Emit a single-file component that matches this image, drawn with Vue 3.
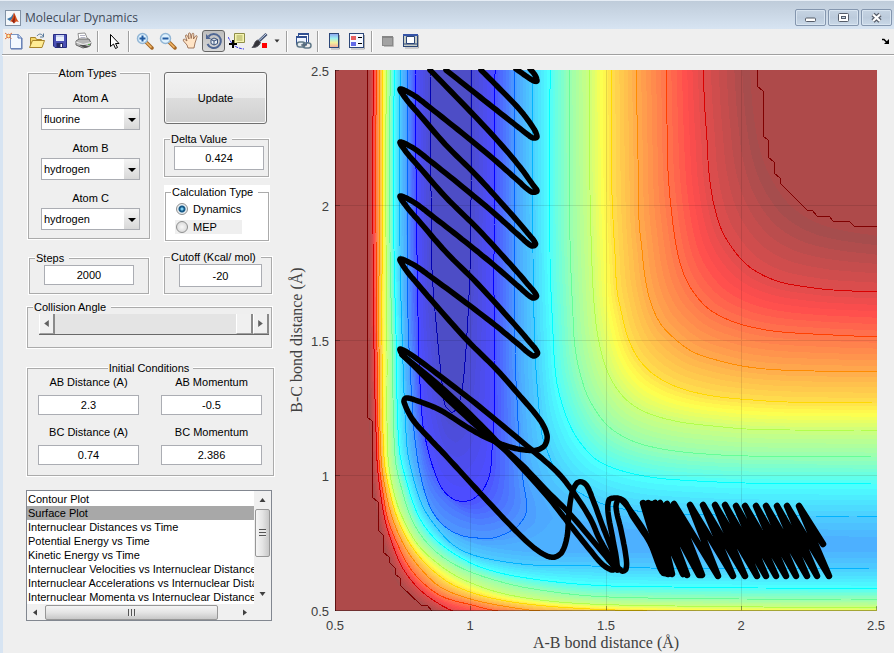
<script setup>
import { ref } from 'vue'

const atoms = ref([
  { id: 'a', label: 'Atom A', value: 'fluorine' },
  { id: 'b', label: 'Atom B', value: 'hydrogen' },
  { id: 'c', label: 'Atom C', value: 'hydrogen' },
])
const delta = ref('0.424')
const mode = ref('dynamics')
const steps = ref('2000')
const cutoff = ref('-20')
const angle = ref(180)
const conditions = ref([
  { id: 'abd', label: 'AB Distance (A)', value: '2.3' },
  { id: 'abm', label: 'AB Momentum', value: '-0.5' },
  { id: 'bcd', label: 'BC Distance (A)', value: '0.74' },
  { id: 'bcm', label: 'BC Momentum', value: '2.386' },
])
const plots = [
  'Contour Plot',
  'Surface Plot',
  'Internuclear Distances vs Time',
  'Potential Energy vs Time',
  'Kinetic Energy vs Time',
  'Internuclear Velocities vs Internuclear Distance',
  'Internuclear Accelerations vs Internuclear Distance',
  'Internuclear Momenta vs Internuclear Distance',
]
const plot = ref('Surface Plot')

/* Smooth curve through the given points */
function spline(pts, n = 8) {
  const out = []
  for (let i = 0; i < pts.length - 1; i++) {
    const a = pts[Math.max(i - 1, 0)]
    const b = pts[i]
    const c = pts[i + 1]
    const d = pts[Math.min(i + 2, pts.length - 1)]
    const len = Math.hypot(c[0] - b[0], c[1] - b[1])
    const l0 = Math.hypot(b[0] - a[0], b[1] - a[1]) || len
    const l2 = Math.hypot(d[0] - c[0], d[1] - c[1]) || len
    const m1 = [0, 1].map((k) => ((c[k] - a[k]) / (l0 + len)) * len)
    const m2 = [0, 1].map((k) => ((d[k] - b[k]) / (len + l2)) * len)
    for (let s = 0; s < n; s++) {
      const t = s / n
      const t2 = t * t
      const t3 = t2 * t
      out.push([0, 1].map((k) =>
        (2 * t3 - 3 * t2 + 1) * b[k] + (t3 - 2 * t2 + t) * m1[k] +
        (3 * t2 - 2 * t3) * c[k] + (t3 - t2) * m2[k]))
    }
  }
  out.push(pts[pts.length - 1])
  return out
}

/* The same curve as a fixed number of points, evenly spaced */
function resample(pts, n = 110) {
  const acc = [0]
  for (let i = 1; i < pts.length; i++) {
    acc.push(acc[i - 1] + Math.hypot(pts[i][0] - pts[i - 1][0], pts[i][1] - pts[i - 1][1]))
  }
  const total = acc[acc.length - 1]
  const out = []
  let j = 1
  for (let i = 0; i < n; i++) {
    const want = (total * i) / (n - 1)
    while (j < pts.length - 1 && acc[j] < want) j++
    const t = (want - acc[j - 1]) / (acc[j] - acc[j - 1] || 1)
    out.push([0, 1].map((k) => pts[j - 1][k] + (pts[j][k] - pts[j - 1][k]) * t))
  }
  return out
}

const toPath = (pts) => 'M' + pts.map((p) => p[0].toFixed(1) + ' ' + p[1].toFixed(1)).join('L')

function jet(v, alpha) {
  const ch = [3, 2, 1].map((c) => Math.max(0, Math.min(1, 1.5 - Math.abs(4 * v - c))))
  const px = ch.map((c) => Math.round(255 * (1 - alpha + alpha * c)))
  return `rgb(${px.join(',')})`
}

/* Edge of the energy cutoff, which follows the steps of the grid */
const plateau = [
  [[757,70],[757,86],[763,91],[763,136],[768,140],[768,157],[774,162],[774,173],[780,178],[780,183],[807,210],[812,210],[817,216],[829,216],[833,221],[849,221],[854,226],[877,226]],
  [[367,70],[367,417],[372,421],[372,497],[378,502],[378,530],[383,535],[383,552],[389,557],[389,562],[395,568],[395,574],[400,578],[400,585],[421,605],[427,605],[432,611]],
]

/* Energy contours: outer branch, inner wall branch, both from the top edge */
const contours = [
  { v: 1, silent: true,
    r: [[750,70],[753,110],[760,150],[772,180],[792,207],[825,226],[877,236]],
    l: [[367,70],[367,300],[369,417],[372,480],[378,525],[388,560],[402,590],[425,608],[455,622],[600,640],[877,646]] },
  { v: 0.9125,
    r: [[703,70],[705,112],[707,140],[709,173],[714,205],[723,233],[741,259],[757,272],[780,282],[807,287],[833,290],[877,292]],
    l: [[373,70],[373,250],[374,350],[377,460],[380,490],[385,520],[392,543],[402,567],[417,587],[433,600],[453,611],[500,622],[600,630],[877,634]] },
  { v: 0.8125,
    r: [[666,70],[667,125],[668,170],[671,207],[677,250],[685,277],[697,297],[713,312],[740,324],[773,331],[813,334],[877,337]],
    l: [[376,70],[376,250],[377,350],[379,460],[383,493],[388,520],[397,543],[408,565],[423,583],[443,597],[472,605],[497,611],[600,620],[877,623]] },
  { v: 0.7375,
    r: [[636,70],[638,160],[639,220],[642,250],[645,277],[650,300],[660,323],[675,339],[693,352],[713,359],[742,366],[780,370],[877,372]],
    l: [[379,70],[379,250],[379,350],[381,457],[386,493],[393,520],[405,547],[420,568],[440,587],[467,598],[497,605],[540,611],[650,616],[877,617]] },
  { v: 0.6625,
    r: [[611,70],[612,193],[615,255],[617,290],[622,315],[628,338],[638,358],[653,374],[677,387],[707,395],[740,399],[787,402],[877,403]],
    l: [[382,70],[382,250],[382,350],[384,457],[390,493],[398,520],[412,547],[430,568],[453,585],[487,597],[527,604],[590,609],[700,612],[877,613]] },
  { v: 0.55,
    r: [[589,70],[590,193],[592,265],[594,303],[598,337],[605,365],[615,386],[630,403],[650,414],[680,422],[713,426],[747,429],[793,430],[877,430]],
    l: [[386,70],[386,250],[387,350],[388,457],[395,497],[405,523],[418,545],[437,563],[460,578],[497,592],[540,600],[590,604],[677,606],[877,608]] },
  { v: 0.475,
    r: [[569,70],[570,240],[573,317],[575,347],[580,373],[589,399],[607,425],[630,440],[657,448],[693,453],[747,456],[877,457]],
    l: [[390,70],[390,250],[392,333],[395,457],[402,490],[412,520],[427,543],[447,560],[473,573],[513,585],[547,591],[590,596],[647,598],[747,599],[877,599]] },
  { v: 0.375,
    r: [[550,70],[550,257],[553,333],[556,377],[563,407],[575,435],[593,457],[608,466],[630,473],[657,478],[697,481],[747,483],[877,484]],
    l: [[394,70],[394,250],[396,333],[399,447],[407,483],[418,515],[433,537],[453,553],[480,567],[520,577],[590,585],[673,587],[877,589]] },
  { v: 0.3,
    r: [[532,70],[533,257],[535,350],[538,397],[542,435],[547,450],[553,465],[565,482],[580,493],[603,504],[637,511],[713,515],[813,516],[877,516]],
    l: [[400,70],[400,250],[402,333],[407,447],[413,477],[423,507],[437,528],[453,545],[473,555],[500,561],[533,565],[590,566],[647,568],[877,569]] },
  { v: 0.265, silent: true,
    r: [[523,70],[524,350],[528,440],[534,472],[547,500],[590,523],[700,533],[877,537]],
    l: [[403,70],[405,333],[411,447],[420,485],[437,515],[460,538],[500,549],[560,553],[700,552],[877,552]] },
  { v: 0.255, silent: true,
    r: [[520,70],[521,350],[524,440],[530,475],[543,498],[553,518]],
    l: [[405,70],[407,333],[413,447],[424,490],[438,516],[460,537],[485,545],[515,543],[540,533],[553,518]] },
  { v: 0.225,
    r: [[514,70],[515,350],[517,400],[519,437],[523,480],[527,507],[524,518],[517,527]],
    l: [[407,70],[408,317],[413,417],[415,440],[420,473],[430,507],[443,525],[460,535],[477,538],[493,538],[507,533],[517,527]] },
  { v: 0.125,
    r: [[495,70],[494,233],[494,350],[494,417],[492,450],[490,473],[483,490],[473,499],[463,502]],
    l: [[415,70],[418,317],[422,417],[428,450],[435,473],[443,490],[453,499],[463,502]] },
  { v: 0.05,
    r: [[471,70],[471,193],[470,270],[467,333],[463,383],[458,407],[452,413]],
    l: [[430,70],[431,193],[432,270],[437,333],[442,383],[445,405],[452,413]] },
].map((c) => ({ ...c, R: resample(spline(c.r)), L: resample(spline(c.l)) }))

const mix = (a, b, t) => a.map((p, i) => [p[0] + (b[i][0] - p[0]) * t, p[1] + (b[i][1] - p[1]) * t])

const bands = []
contours.forEach((c, i) => {
  const next = contours[i + 1]
  const n = !next ? 1 : Math.max(1, Math.round((c.v - next.v) / 0.0135))
  for (let s = 0; s < n; s++) {
    const t = s / n
    const v = next ? c.v + (next.v - c.v) * t : 0.045
    const R = next ? mix(c.R, next.R, t) : c.R
    const L = next ? mix(c.L, next.L, t) : c.L
    bands.push({ d: toPath([...R, ...[...L].reverse()]) + 'Z', fill: jet(v, 0.7) })
  }
})

const lines = [
  ...plateau.map((p) => ({ d: toPath(p), stroke: jet(1, 1) })),
  ...contours.filter((c) => !c.silent).flatMap((c) =>
    [c.R, c.L].map((p) => ({ d: toPath(p), stroke: jet(c.v, 1) }))),
]

/* Reaction trajectory */
const shallow = (x, y, dx, dy) =>
  [[0, 0], [0.1, 0.06], [0.22, 0.18], [0.45, 0.42], [0.68, 0.67], [0.86, 0.88], [0.96, 0.99]].map(([u, w]) => [x + dx * u, y + dy * w])
const steep = (x, y, dx, dy) =>
  [[0.05, 0.07], [0.13, 0.15], [0.33, 0.35], [0.56, 0.55], [0.78, 0.76], [0.93, 0.91], [0.99, 0.98]].map(([u, w]) => [x + dx * u, y + dy * w])

const vibration = [
  [430,70],[467,108],[497,140],[520,167],[533,185],[537,191],
  ...shallow(400, 89, 137, 104).reverse(),
  ...steep(400, 89, 137, 158),
  ...shallow(400, 142, 137, 105).reverse(),
  ...steep(400, 142, 138, 157),
  ...shallow(400, 196, 138, 103).reverse(),
  ...steep(400, 196, 139, 160),
  ...shallow(400, 259, 139, 98).reverse(),
  [406,270],[415,281],[440,310],[467,340],[497,370],[520,396],[540,420],[547,435],[545,445],[537,450],[525,450],[510,447],[487,438],[467,427],[440,410],[415,400],[406,398],[404,402],[413,420],[430,439],[447,457],[480,493],[513,528],[533,547],[547,556],[555,557],[562,552],[567,537],[569,513],[572,493],[577,483],[582,482],[587,486],[593,500],[603,527],[612,550],[618,570],
]
const crossing = [
  [617,570],[598,547],[570,514],[547,491],[520,463],[480,429],[440,392],[415,367],[402,354],[400,349],[410,354],[440,376],[480,407],[527,446],[557,472],[571,489],[590,518],[600,540],[613,561],[622,571],[626,569],[626,557],[621,530],[616,507],[619,499],[625,502],[633,517],[650,543],[662,572],[668,574],
]
const returning = [
  [402,355],[440,386],[480,424],[520,466],[547,496],[570,525],[590,550],[602,564],[612,570],[617,567],[613,540],[608,512],[609,500],[614,498],[620,499],[630,510],[645,532],[655,552],[668,574],
]
const oscillation = [[823,544],[799,506],[829,576],[787,506],[817,576],[777,506],[807,576],[766,506],[796,576],[756,506],[786,576],[745,506],[776,576],[736,506],[766,576],[725,505],[757,576],[715,505],[745,576],[703,505],[733,576],[690,505],[718,576],[674,504],[702,575],[667,504],[699,575],[660,503],[687,575],[655,503],[672,574],[648,503],[668,574],[643,503],[664,573],[651,504],[683,574]]
const trajectory = [
  spline([[516,69],[526,76],[534,81],[537,81],[535,75],[530,69]]),
  spline([[446,70],[480,97],[513,123],[527,134],[533,138],[537,137],[534,129],[520,110],[497,86],[481,70]]),
  spline(vibration),
  spline(crossing),
  spline(returning),
].map(toPath)

const xTicks = [[335, '0.5'], [470, '1'], [606, '1.5'], [741, '2'], [876, '2.5']]
const yTicks = [[70, '2.5'], [205, '2'], [340, '1.5'], [475, '1'], [610, '0.5']]
</script>

<template>
  <div class="window">
    <header class="titlebar">
      <svg class="logo" viewBox="0 0 16 16" aria-hidden="true">
        <rect x=".5" y=".5" width="15" height="15" fill="#f4f7fa" stroke="#8292a5" />
        <path d="M2 9l4-2 2-3 1-1-1 5-3 3z" fill="#3b77a8" />
        <path d="M9 2.500c1.500 2 2.500 7 5 9.500-2-1-3-1-5 1.500-1-1.500-2-2-4-2 2-2 3-5 4-9z" fill="#d7501b" />
        <path d="M9 3c.8 3 0 6-2 8l2 2.500c1-2 1.500-6 0-10.500z" fill="#8c2316" />
      </svg>
      <h1>Molecular Dynamics</h1>
      <div class="winbtns">
        <button type="button" aria-label="Minimize">
          <svg viewBox="0 0 13 11"><rect x="1.500" y="6" width="10" height="3.500" rx="1" fill="#fff" stroke="#555c69" /></svg>
        </button>
        <button type="button" aria-label="Maximize">
          <svg viewBox="0 0 13 11"><rect x="1.500" y="1.500" width="10" height="8" rx="1" fill="#fff" stroke="#555c69" /><rect x="4.500" y="4.500" width="4" height="2" fill="#c7d5e4" stroke="#555c69" /></svg>
        </button>
        <button type="button" aria-label="Close">
          <svg viewBox="0 0 13 11"><path d="M3 2.500l7 6.500M10 2.500L3 9" stroke="#555c69" stroke-width="4.500" /><path d="M3 2.500l7 6.500M10 2.500L3 9" stroke="#fff" stroke-width="2.200" /></svg>
        </button>
      </div>
    </header>

    <div class="client">
      <nav class="toolbar" aria-label="Figure tools">
        <button type="button" aria-label="New figure">
          <svg viewBox="0 0 18 18"><path d="M5.500 2.500h8l3 3v11h-11z" fill="#f4f9ff" stroke="#7c96c4" /><path d="M13 2.500v3.500h3.500" fill="#cfdef5" stroke="#4e6fae" /><path d="M6 17h11V6" fill="none" stroke="#5873ac" /><circle cx="3.500" cy="4" r="1.800" fill="#fff2a8" stroke="#e06a2c" /><path d="M0 1l2 1.500M7 1L5 2.500M0 7l2-1.500M6.500 7L5 5.500" stroke="#e0703a" /></svg>
        </button>
        <button type="button" aria-label="Open file">
          <svg viewBox="0 0 18 18"><path d="M2.500 15.500V5.500h5l1 2h5v2" fill="#f4d667" stroke="#a8842a" /><path d="M1.500 15.500l3-7h12l-2.500 7z" fill="#ffec94" stroke="#a8842a" /><path d="M9 4c2-3 5-2 6 0m.5-2.500V5H12" fill="none" stroke="#57789a" /></svg>
        </button>
        <button type="button" aria-label="Save figure">
          <svg viewBox="0 0 18 18"><path d="M2.500 2.500h13v13H4l-1.500-1.500z" fill="#4b51b5" stroke="#272d83" /><path d="M5 3h8v6H5z" fill="#e9effc" /><path d="M5 4h8" stroke="#aab8e5" /><path d="M5.500 11h6.500v4.500H5.500z" fill="#242965" /><path d="M9.500 12h1.500v3H9.500z" fill="#fff" /></svg>
        </button>
        <button type="button" aria-label="Print figure">
          <svg viewBox="0 0 18 18"><path d="M5 8L4 1.500l7-.5 3 7z" fill="#fff" stroke="#919191" /><path d="M6 3.500h5M6.500 5.500h5" stroke="#b4b4c5" /><path d="M2 9l3-2h10l2 4-1 3-7 2-7-3z" fill="#b7b7b7" stroke="#6a6a6a" /><path d="M2 10l7 2.500 8-2" fill="none" stroke="#eee" /><path d="M5 13l6 3 4-1-4-2z" fill="#505050" /><path d="M14 12.500h2" stroke="#52b445" /></svg>
        </button>
        <span class="sep"></span>
        <button type="button" aria-label="Edit plot">
          <svg viewBox="0 0 18 18"><path d="M5.500 2.500v12l3-2.500 2 4.500 2-1-2-4h3.500z" fill="#fff" stroke="#000" /></svg>
        </button>
        <span class="sep"></span>
        <button type="button" aria-label="Zoom in">
          <svg viewBox="0 0 18 18"><path d="M10 10l6 6" stroke="#a66724" stroke-width="3.500" stroke-linecap="round" /><path d="M10 10l5.500 5.500" stroke="#f4b969" stroke-width="1.500" /><circle cx="6.500" cy="6.500" r="5" fill="#dff2ff" stroke="#92b6d5" stroke-width="1.500" /><path d="M3.500 6.500h6m-3-3v6" stroke="#235ba1" stroke-width="2" /></svg>
        </button>
        <button type="button" aria-label="Zoom out">
          <svg viewBox="0 0 18 18"><path d="M10 10l6 6" stroke="#a66724" stroke-width="3.500" stroke-linecap="round" /><path d="M10 10l5.500 5.500" stroke="#f4b969" stroke-width="1.500" /><circle cx="6.500" cy="6.500" r="5" fill="#dff2ff" stroke="#92b6d5" stroke-width="1.500" /><path d="M3.500 6.500h6" stroke="#235ba1" stroke-width="2" /></svg>
        </button>
        <button type="button" aria-label="Pan">
          <svg viewBox="0 0 18 18"><path d="M6 16l-1-3-3.500-4c-1-1.500.5-2.500 1.500-1.500l2 1.500-1.500-5c0-1.500 1.500-1.500 2 0L7 7l-.5-5c0-1.500 2-1.500 2 0l.7 4.500.8-4.500c.5-1.300 2-1 1.800.5L11.500 7l2-3c1-1 2 0 1.500 1l-2 6-1 5z" fill="#ffe4c6" stroke="#8d5e41" stroke-width=".8" /></svg>
        </button>
        <button type="button" class="pressed" aria-label="Rotate 3D" aria-pressed="true">
          <svg viewBox="0 0 18 18"><path d="M3.500 4.500A7 7 0 1 1 2.500 12" fill="none" stroke="#506794" stroke-width="2" /><path d="M1 2v5h5z" fill="#506794" /><path d="M6 7.500l3-1.500 3.500 1.500v4L9 13l-3-1.500zM6 7.500L9 9l3.500-1.500M9 9v4" fill="#eaf0f7" stroke="#395079" /></svg>
        </button>
        <button type="button" aria-label="Data cursor">
          <svg viewBox="0 0 18 18"><path d="M0 5c3 5 5 11 16 12" fill="none" stroke="#3333e5" stroke-dasharray="3 1" /><path d="M6.500 1.500h10v9h-7l-3 2z" fill="#f4f4b0" stroke="#8f8e4a" /><path d="M8.500 4h6m-6 2h6m-6 2h6" stroke="#a7a758" /><path d="M1 12h8M5 8v8" stroke="#000" stroke-width="2" /></svg>
        </button>
        <button type="button" aria-label="Brush data">
          <svg viewBox="0 0 18 18"><path d="M15.500 2L8 9" stroke="#425171" stroke-width="3" /><path d="M15 2L8 8.500" stroke="#c3d4ec" /><path d="M9.500 10.500L7 8c-4 1-3 5-6 7.500 4 0 7-1 8.500-5z" fill="#34343a" stroke="#54545d" /><path d="M11 11h5v5h-5z" fill="#f00" /></svg>
        </button>
        <button type="button" class="narrow" aria-label="Brush colour"><svg viewBox="0 0 6 4"><path d="M.5.5h5L3 3.500z" fill="#333" /></svg></button>
        <span class="sep"></span>
        <button type="button" aria-label="Link plot">
          <svg viewBox="0 0 18 18"><path d="M4.500 1.500h10v9h-10z" fill="#fff" stroke="#315092" /><path d="M4 2h11" stroke="#315092" stroke-width="2" /><path d="M2.500 4.500h10v8h-10z" fill="#eff5ff" stroke="#315092" /><path d="M2 5h11" stroke="#315092" stroke-width="2" /><rect x="3" y="10" width="8" height="5" rx="2.500" fill="#e7edf0" stroke="#617989" stroke-width="1.500" /><rect x="9" y="11" width="8" height="5" rx="2.500" fill="none" stroke="#617989" stroke-width="1.500" /><path d="M7 13h6" stroke="#45576a" /></svg>
        </button>
        <span class="sep"></span>
        <button type="button" aria-label="Insert colorbar">
          <svg viewBox="0 0 18 18"><defs><linearGradient id="cb" x2="0" y2="1"><stop offset="0" stop-color="#8da0f0" /><stop offset=".35" stop-color="#9df1f2" /><stop offset=".65" stop-color="#f3f19c" /><stop offset="1" stop-color="#f4a79c" /></linearGradient></defs><path d="M14.500 3v14H6" fill="none" stroke="#aaa" /><rect x="4.500" y="1.500" width="9" height="14" fill="url(#cb)" stroke="#2c4778" /></svg>
        </button>
        <button type="button" aria-label="Insert legend">
          <svg viewBox="0 0 18 18"><path d="M16.500 3v14H3" fill="none" stroke="#aaa" /><rect x="1.500" y="1.500" width="14" height="14" fill="#f5f8ff" stroke="#2c4778" /><path d="M3 4h5v4H3z" fill="#e66060" /><path d="M3 10h5v4H3z" fill="#6069e6" /><path d="M10 5.500h4m-4 6h4" stroke="#000" /></svg>
        </button>
        <span class="sep"></span>
        <button type="button" aria-label="Hide plot tools">
          <svg viewBox="0 0 18 18"><path d="M14.500 5v9.500H5" fill="none" stroke="#bbb" /><rect x="3.500" y="4.500" width="10" height="9" fill="#a2a2a2" stroke="#898989" /><path d="M3 5h11" stroke="#858585" stroke-width="2" /></svg>
        </button>
        <button type="button" aria-label="Show plot tools">
          <svg viewBox="0 0 18 18"><path d="M16.500 3v13H3" fill="none" stroke="#aaa" /><rect x="1.500" y="2.500" width="14" height="12" fill="#c8cec6" stroke="#2c4778" /><path d="M1 3h15" stroke="#3655a8" stroke-width="2" /><path d="M4.500 4.500h8v7h-8z" fill="#fff" stroke="#2c4778" /><path d="M2 12h13" stroke="#2c4778" /></svg>
        </button>
        <button type="button" class="dock" aria-label="Dock figure"><svg viewBox="0 0 8 7"><path d="M0 1.500h2l3 3" fill="none" stroke="#000" stroke-width="1.500" /><path d="M7 1v5H2z" fill="#000" /></svg></button>
      </nav>

      <main class="body">
        <form class="controls" @submit.prevent>
          <div class="columns">
            <div class="column first">
              <fieldset class="atoms">
                <legend class="mid">Atom Types</legend>
                <div v-for="a in atoms" :key="a.id" class="field">
                  <label :for="'atom-' + a.id">{{ a.label }}</label>
                  <div class="drop">
                    <select :id="'atom-' + a.id" v-model="a.value">
                      <option>fluorine</option>
                      <option>hydrogen</option>
                    </select>
                  </div>
                </div>
              </fieldset>
              <fieldset class="steps">
                <legend><label for="steps">Steps</label></legend>
                <input id="steps" v-model="steps" type="text" />
              </fieldset>
            </div>
            <div class="column second">
              <button type="submit" class="update">Update</button>
              <fieldset class="delta">
                <legend><label for="delta">Delta Value</label></legend>
                <input id="delta" v-model="delta" type="text" />
              </fieldset>
              <div class="white">
                <fieldset class="calc">
                  <legend>Calculation Type</legend>
                  <label><input v-model="mode" type="radio" name="mode" value="dynamics" />Dynamics</label>
                  <label class="shade"><input v-model="mode" type="radio" name="mode" value="mep" />MEP</label>
                </fieldset>
              </div>
              <fieldset class="cutoff">
                <legend><label for="cutoff">Cutoff (Kcal/ mol)</label></legend>
                <input id="cutoff" v-model="cutoff" type="text" />
              </fieldset>
            </div>
          </div>

          <fieldset class="angle">
            <legend><label for="angle">Collision Angle</label></legend>
            <div class="slider">
              <button type="button" aria-label="Decrease angle"><svg viewBox="0 0 4 6"><path d="M4 0v6L0 3z" fill="#606060" /></svg></button>
              <input id="angle" v-model="angle" type="range" min="0" max="180" />
              <button type="button" aria-label="Increase angle"><svg viewBox="0 0 4 6"><path d="M0 0v6l4-3z" fill="#606060" /></svg></button>
            </div>
          </fieldset>

          <fieldset class="initial">
            <legend class="mid">Initial Conditions</legend>
            <div class="pairs">
              <div v-for="c in conditions" :key="c.id" class="pair">
                <label :for="c.id">{{ c.label }}</label>
                <input :id="c.id" v-model="c.value" type="text" />
              </div>
            </div>
          </fieldset>

          <div class="listbox">
            <select v-model="plot" size="8" aria-label="Plot type">
              <option v-for="p in plots" :key="p">{{ p }}</option>
            </select>
            <div class="vbar">
              <svg viewBox="0 0 6 4"><path d="M0 4h6L3 0z" fill="#404040" /></svg>
              <i class="thumb"></i>
              <svg viewBox="0 0 6 4"><path d="M0 0h6L3 4z" fill="#404040" /></svg>
            </div>
            <div class="hbar">
              <svg viewBox="0 0 4 6"><path d="M4 0v6L0 3z" fill="#404040" /></svg>
              <i class="thumb"></i>
              <svg viewBox="0 0 4 6"><path d="M0 0v6l4-3z" fill="#404040" /></svg>
            </div>
          </div>
        </form>

        <svg class="plot" viewBox="284 56 610 597" role="img" aria-label="Potential energy surface with trajectory">
          <defs>
            <clipPath id="axes"><rect x="335" y="70" width="542" height="541" /></clipPath>
            <clipPath id="path"><rect x="335" y="69" width="542" height="542" /></clipPath>
          </defs>
          <g clip-path="url(#axes)" shape-rendering="crispEdges">
            <rect x="335" y="70" width="542" height="541" fill="#ae4a4a" />
            <path v-for="(b, i) in bands" :key="'b' + i" :d="b.d" :fill="b.fill" />
            <path v-for="(l, i) in lines" :key="'l' + i" :d="l.d" :stroke="l.stroke" fill="none" />
            <path d="M470.500 70v541M606.500 70v541M741.500 70v541M335 205.500h542M335 340.500h542M335 475.500h542" stroke="#000" stroke-opacity=".1" />
            <path d="M335.500 70v541" stroke="#400" stroke-opacity=".75" />
            <path d="M335 610.500h542M470.500 606v5M606.500 606v5M741.500 606v5M876.500 606v5M335 70.500h4M335 205.500h5M335 340.500h5M335 475.500h5" stroke="#000" stroke-opacity=".35" />
          </g>
          <g clip-path="url(#path)" fill="none" stroke="#000" stroke-width="5.500" stroke-linejoin="round" stroke-linecap="round">
            <path v-for="(t, i) in trajectory" :key="'t' + i" :d="t" />
            <path :d="toPath(oscillation)" stroke-width="6.500" />
          </g>
          <g class="ticks">
            <text v-for="t in xTicks" :key="'x' + t[0]" :x="t[0]" y="630" text-anchor="middle">{{ t[1] }}</text>
            <text v-for="t in yTicks" :key="'y' + t[0]" x="329" :y="t[0] + 6" text-anchor="end">{{ t[1] }}</text>
          </g>
          <g class="names">
            <text x="606" y="648" text-anchor="middle">A-B bond distance (Å)</text>
            <text transform="translate(302 340) rotate(-90)" text-anchor="middle">B-C bond distance (Å)</text>
          </g>
        </svg>
      </main>
    </div>
  </div>
</template>

<style>
body {
  background: #efefef;
}
</style>

<style scoped>
* {
  box-sizing: border-box;
}
.window {
  min-height: 100vh;
  font: 11px/12px "Liberation Sans", Arial, sans-serif;
  color: #000;
  background: #d7e4f2;
}
button, input, select {
  font: inherit;
  color: inherit;
  margin: 0;
  padding: 0;
}
svg {
  display: block;
}
.titlebar {
  height: 29px;
  padding: 5px 2px 0 5px;
  display: flex;
  align-items: center;
  border-top: 1px solid #e6edf5;
  background: linear-gradient(#bfccda, #d7e4f2);
}
.logo {
  width: 16px;
  height: 16px;
}
h1 {
  flex: 1;
  margin: 0 0 0 4px;
  font: 12px/16px "Open Sans", "Noto Sans", sans-serif;
  color: #3f4a59;
}
.winbtns {
  display: flex;
  gap: 2px;
}
.winbtns button {
  width: 31px;
  height: 17px;
  display: grid;
  place-items: center;
  border: 1px solid #8496ae;
  border-radius: 2px;
  background: linear-gradient(#c6d4e3, #bccbdc 50%, #c9d8e7);
  box-shadow: inset 0 0 0 1px #d8e4f0;
}
.winbtns svg {
  width: 13px;
  height: 11px;
}
.client {
  margin-left: 3px;
  background: #efefef;
}
.toolbar {
  height: 27px;
  margin-left: -1px;
  padding-top: 1px;
  display: flex;
  align-items: flex-start;
  border-bottom: 1px solid #fff;
  box-shadow: inset 0 -1px #a0a0a0;
}
.toolbar button {
  width: 23px;
  height: 22px;
  display: grid;
  place-items: center;
  border: 0;
  background: none;
}
.toolbar button svg {
  width: 18px;
  height: 18px;
}
.toolbar .pressed {
  border: 1px solid #666;
  border-radius: 3px;
  background: linear-gradient(#bebebe, #d8d8d8);
}
.toolbar .narrow {
  width: 12px;
}
.toolbar .narrow svg {
  width: 6px;
  height: 4px;
}
.toolbar .dock {
  width: 16px;
  margin-left: auto;
}
.toolbar .dock svg {
  width: 8px;
  height: 7px;
}
.sep {
  width: 2px;
  height: 21px;
  margin: 1px 3px 0;
  border-left: 1px solid #a0a0a0;
  border-right: 1px solid #fff;
}
.body {
  display: flex;
  align-items: flex-start;
}
.controls {
  flex: 0 0 281px;
  padding: 11px 7px 0 23px;
}
.plot {
  flex: 1;
  min-width: 0;
}
.ticks {
  font: 13px "Liberation Sans", Arial, sans-serif;
  fill: #404040;
}
.names {
  font: 16px "Liberation Serif", "Times New Roman", serif;
  fill: #404040;
}
fieldset {
  min-width: 0;
  margin: 0;
  padding: 0;
  border: 2px #fff;
  border-style: ridge groove groove ridge;
}
legend {
  height: 12px;
  margin-left: 5px;
  padding: 0 5px 0 1px;
  white-space: nowrap;
}
legend.mid {
  margin: 0 auto;
  padding: 0 4px 0 1px;
}
input[type="text"] {
  display: block;
  text-align: center;
  background: #fff;
  border: 1px solid #abadb3;
  border-radius: 0;
}
.columns {
  display: flex;
  gap: 12px;
  padding-left: 1px;
}
.column {
  display: flex;
  flex-direction: column;
}
.first {
  width: 124px;
  gap: 12px;
}
.second {
  width: 110px;
  padding-top: 5px;
}
.atoms {
  height: 173px;
}
.field {
  width: 99px;
  margin: 0 0 12px 12px;
  text-align: center;
}
.atoms .mid + .field {
  margin-top: 13px;
}
.field:last-child {
  margin-bottom: 0;
}
.field label {
  display: block;
  margin-bottom: 4px;
}
.drop {
  position: relative;
}
.drop select {
  display: block;
  width: 100%;
  height: 22px;
  padding-left: 2px;
  appearance: none;
  border: 1px solid #abadb3;
  border-radius: 0;
  background: linear-gradient(#f4f4f4, #d8d8d8) right / 15px 100% no-repeat #fff;
}
.drop::after {
  content: "";
  position: absolute;
  right: 4px;
  top: 10px;
  border: 4px solid transparent;
  border-top: 4px solid #000;
  border-bottom: 0;
  pointer-events: none;
}
.steps {
  height: 43px;
  margin: 0 1px;
}
.steps input {
  width: 90px;
  height: 20px;
  margin: 1px 0 0 14px;
}
.update {
  width: 103px;
  height: 52px;
  margin-left: 1px;
  border: 1px solid #707070;
  border-radius: 3px;
  background: linear-gradient(#f2f2f2, #ebebeb 49%, #dddddd 50%, #cfcfcf);
  box-shadow: inset 0 0 0 1px #fafafa;
}
.delta {
  width: 107px;
  height: 45px;
  margin-top: 9px;
}
.delta input {
  width: 90px;
  height: 24px;
  margin: 1px 0 0 9px;
}
.white {
  width: 106px;
  margin: 7px 0 0 1px;
  padding-top: 1px;
  background: #fff;
}
.calc {
  height: 56px;
}
.calc label {
  display: flex;
  align-items: center;
  gap: 5px;
  width: 67px;
  height: 14px;
  margin: 4px 0 0 9px;
}
.calc .shade {
  background: #efefef;
}
.calc input {
  appearance: none;
  width: 12px;
  height: 12px;
  margin-left: 1px;
  border: 1px solid #8e8f8f;
  border-radius: 50%;
  background: radial-gradient(#f8f8f8, #d0d0d0);
}
.calc input:checked {
  background: radial-gradient(circle, #7fd0f4 0 1px, #165a88 2px 3px, #e8eef2 4px);
}
.cutoff {
  height: 44px;
  margin-top: 9px;
}
.cutoff input {
  width: 83px;
  height: 23px;
  margin: 1px 0 0 14px;
}
.angle {
  width: 247px;
  height: 48px;
  margin-top: 6px;
}
.slider {
  display: flex;
  width: 230px;
  height: 21px;
  margin: 1px 0 0 11px;
  border-bottom: 1px solid #696969;
}
.slider button {
  width: 16px;
  display: grid;
  place-items: center;
  border: 0;
  border-right: 2px solid #8a8a8a;
  border-bottom: 1px solid #a0a0a0;
  border-left: 1px solid #fff;
  background: #f0f0f0;
}
.slider svg {
  width: 5px;
  height: 7px;
}
.slider input {
  flex: 1;
  min-width: 0;
  height: 20px;
  appearance: none;
  background: #e4e4e4;
}
.slider input::-webkit-slider-thumb {
  appearance: none;
  width: 17px;
  height: 20px;
  background: #f0f0f0;
  border-left: 1px solid #fff;
  border-right: 2px solid #8a8a8a;
  border-bottom: 1px solid #a0a0a0;
}
.initial {
  width: 249px;
  height: 115px;
  margin-top: 13px;
}
.pairs {
  display: grid;
  grid-template-columns: 101px 101px;
  gap: 11px 22px;
  margin: 2px 0 0 10px;
}
.pair label {
  display: block;
  text-align: center;
  margin-bottom: 7px;
}
.pair input {
  width: 100%;
  height: 20px;
}
.listbox {
  display: grid;
  grid-template-columns: 1fr 17px;
  grid-template-rows: 113px 16px;
  width: 246px;
  margin-top: 13px;
  border: 1px solid #828790;
  background: #f0f0f0;
}
.listbox select {
  appearance: none;
  display: block;
  width: 100%;
  min-width: 0;
  height: 113px;
  padding: 1px 0 0;
  border: 0;
  border-radius: 0;
  outline: 0;
  overflow: hidden;
  scrollbar-width: none;
  background: #fff;
}
.listbox option {
  height: 14px;
  min-height: 14px;
  padding: 1px 1px 0;
  line-height: 13px;
  color: #000;
  overflow: hidden;
}
.listbox option:checked {
  background: linear-gradient(#a8a8a8, #a8a8a8);
}
.vbar, .hbar {
  display: flex;
  align-items: center;
}
.vbar {
  flex-direction: column;
  padding: 7px 1px 8px;
}
.vbar svg {
  width: 7px;
  height: 4px;
}
.vbar svg:last-child {
  margin-top: auto;
}
.hbar {
  padding: 0 7px 0 6px;
}
.hbar svg {
  width: 4px;
  height: 7px;
}
.hbar svg:last-child {
  margin-left: auto;
}
.thumb {
  display: grid;
  place-items: center;
  border: 1px solid #979797;
  border-radius: 2px;
}
.thumb::after {
  content: "";
}
.vbar .thumb {
  width: 15px;
  height: 48px;
  margin-top: 7px;
  background: linear-gradient(90deg, #f5f5f5, #e4e4e4 50%, #c8c8c8);
}
.vbar .thumb::after {
  width: 7px;
  height: 8px;
  background: repeating-linear-gradient(#555 0 1px, #e8e8e8 1px 3px);
}
.hbar .thumb {
  width: 173px;
  height: 15px;
  margin-left: 8px;
  background: linear-gradient(#f5f5f5, #e4e4e4 50%, #c8c8c8);
}
.hbar .thumb::after {
  width: 8px;
  height: 7px;
  background: repeating-linear-gradient(90deg, #555 0 1px, #e8e8e8 1px 3px);
}
</style>
